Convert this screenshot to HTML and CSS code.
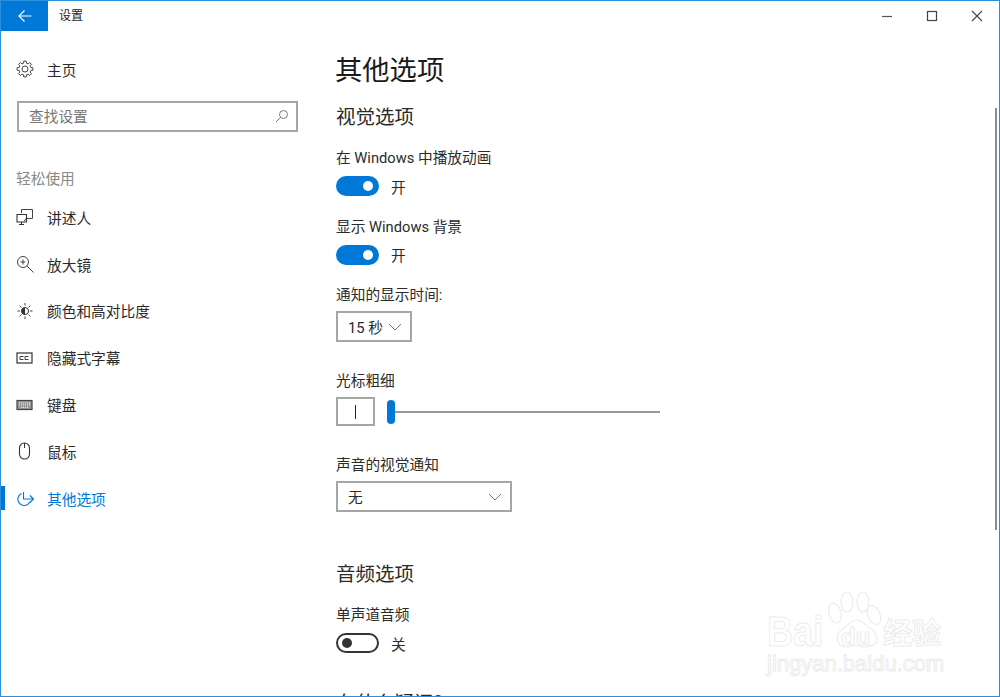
FILE: index.html
```html
<!DOCTYPE html>
<html>
    <head>
        <title>设置</title>
        <link rel="stylesheet" href="styles.css">
    </head>
    <body>
        <div class="window">
            <div class="titlebar">
                <div class="back">
                    <svg width="16" height="16" viewBox="0 0 16 16"><path d="M14.500 8H2M7.500 2.500L2 8l5.500 5.500" fill="none" stroke="#fff" stroke-width="1.200"/></svg>
                </div>
                <div class="app-name">设置</div>
                <div class="controls">
                    <svg width="12" height="12" viewBox="0 0 12 12"><path d="M1 6.500h10" stroke="#555" stroke-width="1.200"/></svg>
                    <svg width="12" height="12" viewBox="0 0 12 12"><rect x="1.500" y="1.500" width="9" height="9" fill="none" stroke="#444" stroke-width="1.200"/></svg>
                    <svg width="12" height="12" viewBox="0 0 12 12"><path d="M1 1l10 10M11 1L1 11" stroke="#444" stroke-width="1.100"/></svg>
                </div>
            </div>
            <div class="content">
                <div class="sidebar">
                    <div class="home">
                        <svg class="icon" width="18" height="18" viewBox="0 0 18 18"><polygon transform="translate(9 9)" points="5.82,-1.45 7.9,-1.25 7.9,1.25 5.82,1.45 5.14,3.09 6.47,4.7 4.7,6.47 3.09,5.14 1.45,5.82 1.25,7.9 -1.25,7.9 -1.45,5.82 -3.09,5.14 -4.7,6.47 -6.47,4.7 -5.14,3.09 -5.82,1.45 -7.9,1.25 -7.9,-1.25 -5.82,-1.45 -5.14,-3.09 -6.47,-4.7 -4.7,-6.47 -3.09,-5.14 -1.45,-5.82 -1.25,-7.9 1.25,-7.9 1.45,-5.82 3.09,-5.14 4.7,-6.47 6.47,-4.7 5.14,-3.09" fill="none" stroke="#444"/><circle cx="9" cy="9" r="3" fill="none" stroke="#444"/></svg>
                        <span>主页</span>
                    </div>
                    <div class="search">
                        <span>查找设置</span>
                        <svg width="14" height="14" viewBox="0 0 14 14"><circle cx="8.500" cy="5.500" r="4" fill="none" stroke="#777"/><path d="M5.500 8.500L1 13" stroke="#777"/></svg>
                    </div>
                    <div class="group-name">轻松使用</div>
                    <div class="nav-item">
                        <svg class="icon" width="18" height="18" viewBox="0 0 18 18"><path d="M5.500 5V1.500h11v9h-5.500M8 13.500l2-3h1" fill="none" stroke="#444"/><path d="M1 6.500h9.500v7.500H1zM5.500 14v2.500M3 16.500h5" fill="none" stroke="#333" stroke-width="1.100"/></svg>
                        <span>讲述人</span>
                    </div>
                    <div class="nav-item">
                        <svg class="icon" width="18" height="18" viewBox="0 0 18 18"><circle cx="7" cy="7" r="5.500" fill="none" stroke="#444"/><path d="M11 11l6.500 6.500M4.500 7h5M7 4.500v5" stroke="#444" fill="none"/></svg>
                        <span>放大镜</span>
                    </div>
                    <div class="nav-item">
                        <svg class="icon" width="18" height="18" viewBox="0 0 18 18"><circle cx="9" cy="9" r="3.500" fill="none" stroke="#333"/><path d="M9 5.500a3.500 3.500 0 0 0 0 7z" fill="#333"/><path d="M9 1v2.500M9 14.500V17M1.500 9H4M14 9h2.500M3.700 3.700l1.800 1.800M12.500 12.500l1.800 1.800M14.300 3.700l-1.800 1.800M5.500 12.500l-1.800 1.800" stroke="#444"/></svg>
                        <span>颜色和高对比度</span>
                    </div>
                    <div class="nav-item">
                        <svg class="icon" width="18" height="18" viewBox="0 0 18 18"><rect x="1" y="4" width="15" height="10" fill="none" stroke="#333" stroke-width="1.200"/><path d="M7.500 7.500H4v3h3.500M12.500 7.500H9v3h3.500" fill="none" stroke="#444"/></svg>
                        <span>隐藏式字幕</span>
                    </div>
                    <div class="nav-item">
                        <svg class="icon" width="18" height="18" viewBox="0 0 18 18"><rect x="1" y="4.500" width="15" height="9" fill="#999" stroke="#444" stroke-width="1.200"/><path d="M3 7h11M3 9h11M5 11.500h7" stroke="#eee" stroke-dasharray="1 1"/></svg>
                        <span>键盘</span>
                    </div>
                    <div class="nav-item">
                        <svg class="icon" width="18" height="18" viewBox="0 0 18 18"><rect x="3.500" y="1" width="10" height="16" rx="5" fill="none" stroke="#333" stroke-width="1.100"/><path d="M8.500 1v5" stroke="#333"/></svg>
                        <span>鼠标</span>
                    </div>
                    <div class="nav-item active">
                        <svg class="icon" width="18" height="18" viewBox="0 0 18 18"><path d="M5.500 4.500A6.300 6.300 0 1 0 13.800 13M7.500 3v7h10M14 6.500l3.500 3.500-3.500 3.500" fill="none" stroke="#0078d7" stroke-width="1.100"/></svg>
                        <span>其他选项</span>
                    </div>
                </div>
                <div class="main">
                    <h1>其他选项</h1>
                    <h2>视觉选项</h2>
                    <div class="label first">在 Windows 中播放动画</div>
                    <div class="toggle-row">
                        <div class="toggle on"></div>
                        <span>开</span>
                    </div>
                    <div class="label">显示 Windows 背景</div>
                    <div class="toggle-row">
                        <div class="toggle on"></div>
                        <span>开</span>
                    </div>
                    <div class="label">通知的显示时间:</div>
                    <div class="select short">
                        <span>15 秒</span>
                        <svg width="14" height="8" viewBox="0 0 14 8"><path d="M1 1l6 6 6-6" fill="none" stroke="#777"/></svg>
                    </div>
                    <div class="label wide">光标粗细</div>
                    <div class="cursor-row">
                        <div class="cursor-box"><i></i></div>
                        <div class="slider"><div class="thumb"></div></div>
                    </div>
                    <div class="label wide">声音的视觉通知</div>
                    <div class="select long">
                        <span>无</span>
                        <svg width="14" height="8" viewBox="0 0 14 8"><path d="M1 1l6 6 6-6" fill="none" stroke="#777"/></svg>
                    </div>
                    <h2 class="audio">音频选项</h2>
                    <div class="label first">单声道音频</div>
                    <div class="toggle-row">
                        <div class="toggle"></div>
                        <span>关</span>
                    </div>
                    <h2 class="question">有什么疑问?</h2>
                </div>
            </div>
            <div class="scrollbar"></div>
            <div class="watermark">
                <svg width="60" height="64" viewBox="0 0 60 64">
                    <g fill="#fff" stroke="#ececec" stroke-width="1.200">
                        <ellipse cx="7" cy="25" rx="6" ry="10" transform="rotate(-15 7 25)"/>
                        <ellipse cx="19" cy="14" rx="6" ry="10"/>
                        <ellipse cx="35" cy="14" rx="6" ry="10"/>
                        <ellipse cx="46" cy="27" rx="6" ry="10" transform="rotate(-25 46 27)"/>
                        <path d="M28 32c-5 0-7 5-12 8-5 3-7 6-7 10 0 6 5 9 10 9 4 0 6-2 9-2s5 2 9 2c7 0 12-3 12-9 0-4-3-7-7-10-5-3-8-8-14-8z"/>
                    </g>
                </svg>
                <span class="wm-bai">Bai</span>
                <span class="wm-du">du</span>
                <span class="wm-cn">经验</span>
                <span class="wm-url">jingyan.baidu.com</span>
            </div>
        </div>
    </body>
</html>
```

FILE: styles.css
```css
* {
    box-sizing: border-box;
}
html, body {
    margin: 0;
    height: 100%;
    overflow: hidden;
}
body {
    font-family: Roboto, "Noto Sans CJK SC", sans-serif;
    font-size: 14.700px;
    color: #2b2b2b;
    background: #fff;
}
.window {
    position: relative;
    width: 1000px;
    height: 697px;
    border: 1px solid #2b8fdc;
    overflow: hidden;
    display: flex;
    flex-direction: column;
}
.titlebar {
    height: 30px;
    flex: none;
    display: flex;
    align-items: center;
}
.back {
    width: 47px;
    height: 30px;
    background: #0078d7;
    display: flex;
    align-items: center;
    justify-content: center;
}
.app-name {
    margin: 0 0 3px 11px;
    font-size: 12px;
    color: #222;
}
.controls {
    margin-left: auto;
    display: flex;
    align-items: center;
    gap: 33px;
    padding-right: 16px;
}
.content {
    flex: 1;
    display: flex;
    min-height: 0;
}
.sidebar {
    width: 335px;
    flex: none;
}
.icon {
    flex: none;
}
.home {
    display: flex;
    align-items: center;
    gap: 13px;
    height: 24px;
    margin-top: 26px;
    padding-left: 15px;
}
.search {
    width: 281px;
    height: 31px;
    margin: 20px 0 0 16px;
    border: 2px solid #a6a6a6;
    display: flex;
    align-items: center;
    justify-content: space-between;
    padding: 0 7px 2px 10px;
    color: #767676;
}
.group-name {
    margin: 36px 0 4px 15px;
    height: 22px;
    line-height: 22px;
    color: #8a8a8a;
}
.nav-item {
    position: relative;
    display: flex;
    align-items: center;
    gap: 13px;
    height: 46.800px;
    padding-left: 15px;
}
.nav-item.active {
    color: #0078d7;
}
.nav-item.active::before {
    content: "";
    position: absolute;
    left: 0;
    top: 11px;
    width: 4px;
    height: 24px;
    background: #0078d7;
}
.main {
    flex: 1;
    min-width: 0;
}
h1 {
    margin: 21px 0 0 -1px;
    height: 38px;
    line-height: 38px;
    font-size: 27.300px;
    font-weight: 400;
    color: #1a1a1a;
}
h2 {
    margin: 13px 0 0;
    height: 30px;
    line-height: 30px;
    font-size: 19.500px;
    font-weight: 400;
    color: #2b2b2b;
}
h2.audio {
    margin-top: 48px;
}
h2.question {
    margin-top: 36px;
}
.label {
    height: 22px;
    line-height: 22px;
    margin-top: 19.500px;
}
.label.first {
    margin-top: 14px;
}
.label.wide {
    margin-top: 28px;
}
.toggle-row {
    display: flex;
    align-items: center;
    gap: 12px;
    height: 20px;
    margin-top: 7px;
}
.toggle {
    position: relative;
    width: 43px;
    height: 20px;
    border-radius: 10px;
    border: 2px solid #333;
}
.toggle::after {
    content: "";
    position: absolute;
    left: 4px;
    top: 3px;
    width: 10px;
    height: 10px;
    border-radius: 50%;
    background: #333;
}
.toggle.on {
    background: #0078d7;
    border-color: #0078d7;
}
.toggle.on::after {
    left: auto;
    right: 4px;
    background: #fff;
}
.select {
    height: 31px;
    margin: 5px 0 1px;
    border: 2px solid #a6a6a6;
    display: flex;
    align-items: center;
    justify-content: space-between;
    padding: 0 8px 0 10px;
}
.select.short {
    width: 76px;
}
.select.long {
    width: 176px;
}
.cursor-row {
    display: flex;
    align-items: center;
    height: 29px;
    margin: 5px 0 1px;
}
.cursor-box {
    width: 39px;
    height: 29px;
    border: 2px solid #a6a6a6;
    display: flex;
    align-items: center;
    justify-content: center;
}
.cursor-box i {
    width: 1px;
    height: 14px;
    background: #222;
}
.slider {
    position: relative;
    width: 273px;
    height: 2px;
    margin-left: 12px;
    background: #999;
}
.thumb {
    position: absolute;
    left: 0;
    top: -11px;
    width: 8px;
    height: 24px;
    border-radius: 4px;
    background: #0078d7;
}
.scrollbar {
    position: absolute;
    right: 2px;
    top: 107px;
    width: 2px;
    height: 422px;
    background: #8c8c8c;
}
.watermark {
    position: absolute;
    left: 764px;
    top: 587px;
    width: 190px;
    height: 90px;
    color: #fff;
    font-family: "Liberation Sans", sans-serif;
}
.watermark svg {
    position: absolute;
    left: 63px;
    top: 0;
}
.watermark span {
    position: absolute;
    -webkit-text-stroke: 1px #ececec;
    white-space: nowrap;
    line-height: 1;
}
.wm-bai {
    left: 2px;
    top: 23px;
    font-size: 42px;
    font-weight: 700;
    transform: scaleX(.86);
    transform-origin: left;
}
.wm-du {
    left: 76px;
    top: 37px;
    font-size: 24px;
    font-weight: 700;
}
.wm-cn {
    left: 118px;
    top: 29px;
    font-size: 29px;
    font-weight: 700;
    font-family: "Noto Sans CJK SC", sans-serif;
}
.wm-url {
    left: 2px;
    top: 65px;
    font-size: 22px;
}
```
